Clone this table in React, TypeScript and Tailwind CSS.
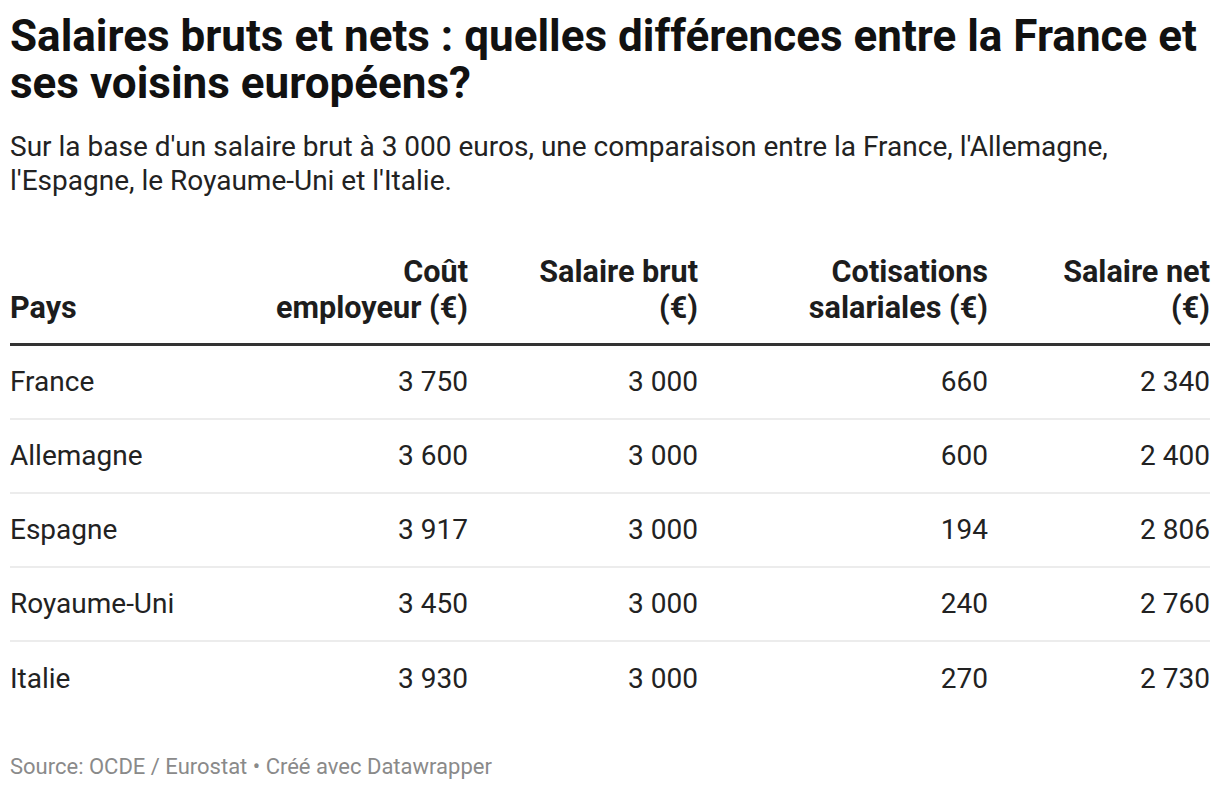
import React from "react";

interface Row {
  pays: string;
  cout: string;
  brut: string;
  cotisations: string;
  net: string;
}

const rows: Row[] = [
  { pays: "France", cout: "3 750", brut: "3 000", cotisations: "660", net: "2 340" },
  { pays: "Allemagne", cout: "3 600", brut: "3 000", cotisations: "600", net: "2 400" },
  { pays: "Espagne", cout: "3 917", brut: "3 000", cotisations: "194", net: "2 806" },
  { pays: "Royaume-Uni", cout: "3 450", brut: "3 000", cotisations: "240", net: "2 760" },
  { pays: "Italie", cout: "3 930", brut: "3 000", cotisations: "270", net: "2 730" },
];

const cols = "grid grid-cols-[228px_230px_230px_290px_222px]";

export default function App() {
  return (
    <div
      className="w-[1220px] h-[790px] bg-white px-[10px] pt-[13px]"
      style={{ fontFamily: "Roboto, 'Liberation Sans', sans-serif" }}
    >
      {/* Title */}
      <h1 className="text-[44px] leading-[47px] font-bold text-[#111]">
        Salaires bruts et nets : quelles différences entre la France et ses voisins européens?
      </h1>
      <p className="mt-[23px] text-[28px] leading-[34px] text-[#222]">
        Sur la base d'un salaire brut à 3 000 euros, une comparaison entre la France, l'Allemagne,
        l'Espagne, le Royaume-Uni et l'Italie.
      </p>

      {/* Table */}
      <div className="mt-[56px] w-[1200px]">
        <div className={`${cols} items-end border-b-[3px] border-[#333] pb-[17px] text-[30.6px] leading-[36px] font-bold text-[#1d1d1d]`}>
          <div>Pays</div>
          <div className="text-right">
            Coût
            <br />
            employeur (€)
          </div>
          <div className="text-right">
            Salaire brut
            <br />
            (€)
          </div>
          <div className="text-right">
            Cotisations
            <br />
            salariales (€)
          </div>
          <div className="text-right">
            Salaire net
            <br />
            (€)
          </div>
        </div>
        {rows.map((row, i) => (
          <div
            key={row.pays}
            className={`${cols} h-[74px] items-center text-[28px] leading-[36px] text-[#222] ${
              i < rows.length - 1 ? "border-b-2 border-[#ececec]" : ""
            }`}
          >
            <div>{row.pays}</div>
            <div className="text-right">{row.cout}</div>
            <div className="text-right">{row.brut}</div>
            <div className="text-right">{row.cotisations}</div>
            <div className="text-right">{row.net}</div>
          </div>
        ))}
      </div>

      {/* Footer */}
      <div className="mt-[37px] text-[22px] leading-[28px] text-[#8a8a8a]">
        Source: OCDE / Eurostat • Créé avec Datawrapper
      </div>
    </div>
  );
}
